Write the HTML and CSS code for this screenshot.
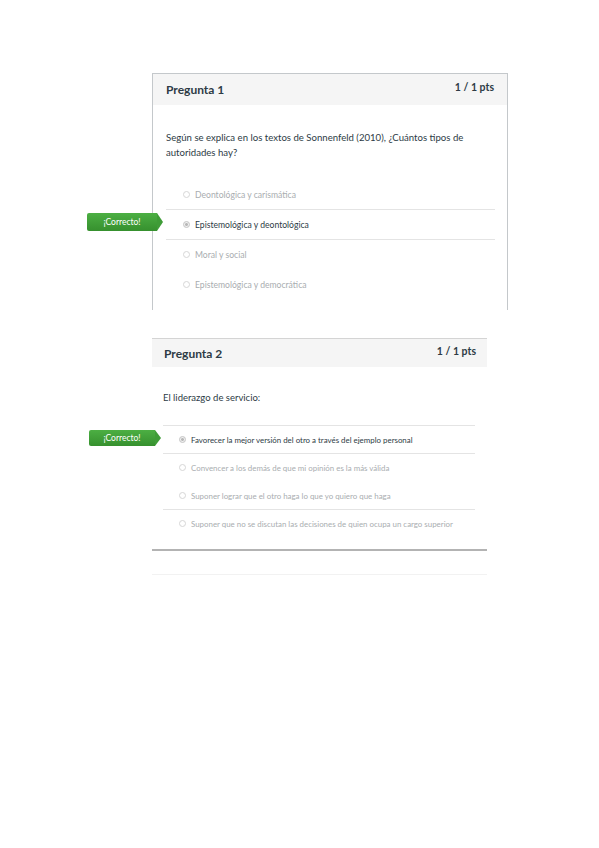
FILE: index.html
```
<!DOCTYPE html>
<html lang="es">

<head>
    <meta charset="UTF-8">
    <meta name="viewport" content="width=device-width, initial-scale=1.0">
    <title>Examen</title>
    <link rel="stylesheet" href="styles.css">
</head>

<body>

    <div class="page">

        <div class="question q1">
            <div class="question-header">
                <span class="question-title">Pregunta 1</span>
                <span class="question-pts">1 / 1 pts</span>
            </div>
            <div class="question-body">
                <p class="question-text">Según se explica en los textos de Sonnenfeld (2010), ¿Cuántos tipos de autoridades hay?</p>
                <div class="answers">
                    <div class="answer divided"><span class="radio"></span>Deontológica y carismática</div>
                    <div class="answer selected divided">
                        <span class="badge">¡Correcto!</span>
                        <span class="radio"></span>Epistemológica y deontológica
                    </div>
                    <div class="answer"><span class="radio"></span>Moral y social</div>
                    <div class="answer"><span class="radio"></span>Epistemológica y democrática</div>
                </div>
            </div>
        </div>

        <div class="question q2">
            <div class="question-header">
                <span class="question-title">Pregunta 2</span>
                <span class="question-pts">1 / 1 pts</span>
            </div>
            <div class="question-body">
                <p class="question-text">El liderazgo de servicio:</p>
                <div class="answers">
                    <div class="answer selected divided first">
                        <span class="badge">¡Correcto!</span>
                        <span class="radio"></span>Favorecer la mejor versión del otro a través del ejemplo personal
                    </div>
                    <div class="answer"><span class="radio"></span>Convencer a los demás de que mi opinión es la más válida</div>
                    <div class="answer divided"><span class="radio"></span>Suponer lograr que el otro haga lo que yo quiero que haga</div>
                    <div class="answer"><span class="radio"></span>Suponer que no se discutan las decisiones de quien ocupa un cargo superior</div>
                </div>
            </div>
            <div class="question-footer"></div>
        </div>

    </div>

</body>

</html>
```

FILE: styles.css
```
body {
    margin: 0;
    background-color: #fff;
    font-family: Lato, "Open Sans", sans-serif;
    color: #2d3b45;
}

.page {
    padding-top: 73px;
}

.question {
    margin-left: 152px;
}

.q1 {
    width: 354px;
    border: 1px solid #c4c8cb;
    border-bottom: none;
}

.q2 {
    width: 335px;
    margin-top: 28px;
    border-top: 1px solid #d4d4d4;
}

.question-header {
    display: flex;
    justify-content: space-between;
    align-items: center;
    background-color: #f5f5f5;
    height: 31px;
    padding: 0 13px;
}

.q2 .question-header {
    height: 28px;
    padding: 0 11px 0 12px;
}

.question-title {
    font-size: 12px;
    font-weight: bold;
    color: #2d3b45;
}

.question-pts {
    font-size: 10.5px;
    font-weight: bold;
    color: #2d3b45;
    margin-bottom: 6px;
}

.q2 .question-pts {
    margin-bottom: 4px;
}

.question-body {
    padding: 25px 12px 10px 13px;
}

.q2 .question-body {
    padding: 24px 12px 11px 11px;
}

.question-text {
    margin: 0 0 20px 0;
    font-size: 9.6px;
    line-height: 15px;
    max-width: 310px;
    color: #2d3b45;
}

.q2 .question-text {
    font-size: 9.5px;
    line-height: 14px;
}

.answer {
    position: relative;
    display: flex;
    align-items: center;
    height: 29px;
    padding-left: 17px;
    font-size: 8.6px;
    color: #a9adb0;
    border-bottom: 1px solid transparent;
}

.q2 .answer {
    height: 27px;
    padding-left: 16px;
    font-size: 7.9px;
}

.answer.divided {
    border-bottom-color: #e4e4e4;
}

.answer.first {
    border-top: 1px solid #e4e4e4;
}

.answer.selected {
    color: #2d3b45;
}

.radio {
    width: 7px;
    height: 7px;
    border: 1px solid #d6d6d6;
    border-radius: 50%;
    margin-right: 5px;
    flex-shrink: 0;
    box-sizing: border-box;
    background-color: #fff;
}

.selected .radio {
    border-color: #c4c4c4;
    background: radial-gradient(circle, #b8b8b8 35%, #efefef 45%);
}

.badge {
    position: absolute;
    right: calc(100% + 9px);
    top: 3px;
    width: 70px;
    height: 18px;
    line-height: 18px;
    text-align: center;
    font-size: 8.5px;
    color: #fff;
    background: linear-gradient(#4caf43, #36902e);
    border-radius: 2px 0 0 2px;
}

.badge::after {
    content: "";
    position: absolute;
    left: 100%;
    top: 0;
    border-top: 9px solid transparent;
    border-bottom: 9px solid transparent;
    border-left: 6px solid #3f9c37;
}

.q2 .badge {
    right: calc(100% + 8px);
    top: 4px;
    width: 66px;
    height: 16px;
    line-height: 16px;
}

.q2 .badge::after {
    border-top-width: 8px;
    border-bottom-width: 8px;
}

.question-footer {
    border-top: 2px solid #b3b3b3;
    border-bottom: 1px solid #f2f2f2;
    height: 23px;
}
```
